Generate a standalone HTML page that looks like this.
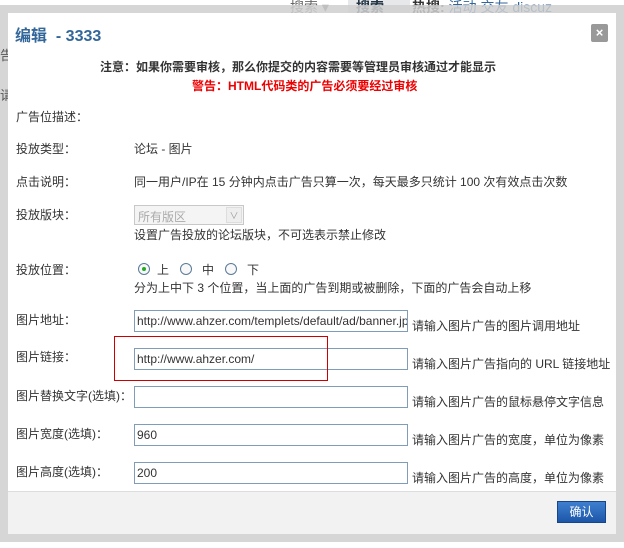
<!DOCTYPE html>
<html><head><meta charset="utf-8"><style>
*{margin:0;padding:0;box-sizing:border-box}
body{width:624px;height:548px;background:#fff;position:relative;overflow:hidden;font-family:"Liberation Sans","Noto Sans CJK SC",sans-serif;font-size:12px;color:#333}
.a{position:absolute;white-space:nowrap}
.ov{position:absolute;left:0;top:5px;width:624px;height:537px;background:#cfcfcf}
.dlg{position:absolute;left:8px;top:13px;width:608px;height:521px;background:#fff}
.ft{position:absolute;left:8px;top:491px;width:608px;height:43px;background:#f2f2f2;border-top:1px solid #ddd}
.in{position:absolute;left:134px;width:274px;height:22px;border:1px solid #7f9db9;background:#fff;padding:3px 2px;font-size:12px;color:#333;overflow:hidden;white-space:nowrap}
.lb{position:absolute;left:16px;white-space:nowrap}
.v{position:absolute;left:134px;white-space:nowrap}
.h{position:absolute;left:412px;white-space:nowrap}
.r{position:absolute;width:12px;height:12px;border:1px solid #5a7a9a;border-radius:50%;background:#f8f8f8}
</style></head><body>
<div class="a" style="left:290px;top:-3px;color:#666;font-size:14px">搜索 ▾</div>
<div class="a" style="left:348px;top:0;width:62px;height:13px;background:#e6e8ea"></div>
<div class="a" style="left:356px;top:-3px;color:#234;font-size:14px;font-weight:bold">搜索</div>
<div class="a" style="left:412px;top:-3px;font-size:14px"><b>热搜:</b> <span style="color:#369">活动 交友 discuz</span></div>
<div class="ov" style="opacity:.85"></div>
<div class="a" style="left:0;top:45px;color:#555;font-size:13px">告</div>
<div class="a" style="left:0;top:85px;color:#555;font-size:13px">请</div>
<div class="dlg"></div>
<div class="a" style="left:15px;top:22px;font-size:16px;font-weight:bold;color:#336699">编辑 &nbsp;- 3333</div>
<div class="a" style="left:591px;top:24px;width:17px;height:18px;background:#999;border-radius:2px;color:#fff;font-weight:bold;text-align:center;line-height:18px;font-size:13px">×</div>
<div class="a" style="left:100px;top:58px;font-weight:bold;color:#333">注意：如果你需要审核，那么你提交的内容需要等管理员审核通过才能显示</div>
<div class="a" style="left:192px;top:77px;font-weight:bold;color:#e00">警告：HTML代码类的广告必须要经过审核</div>
<div class="lb" style="top:108px">广告位描述：</div>
<div class="lb" style="top:140px">投放类型：</div><div class="v" style="top:140px">论坛 - 图片</div>
<div class="lb" style="top:173px">点击说明：</div><div class="v" style="top:173px">同一用户/IP在 15 分钟内点击广告只算一次，每天最多只统计 100 次有效点击次数</div>
<div class="lb" style="top:206px">投放版块：</div>
<div class="a" style="left:134px;top:205px;width:110px;height:20px;border:1px solid #c8c8c8;background:#f4f4f4;color:#aaa;padding:2px 3px">所有版区<span style="position:absolute;right:1px;top:1px;width:16px;height:16px;border:1px solid #ddd;background:#eee;font-size:9px;text-align:center;line-height:16px;color:#999">∨</span></div>
<div class="v" style="top:226px">设置广告投放的论坛版块，不可选表示禁止修改</div>
<div class="lb" style="top:261px">投放位置：</div>
<span class="r" style="left:138px;top:263px"><span style="position:absolute;left:3px;top:3px;width:4px;height:4px;border-radius:50%;background:#2a2"></span></span>
<div class="a" style="left:157px;top:261px">上</div>
<span class="r" style="left:180px;top:263px"></span><div class="a" style="left:202px;top:261px">中</div>
<span class="r" style="left:225px;top:263px"></span><div class="a" style="left:247px;top:261px">下</div>
<div class="v" style="top:279px">分为上中下 3 个位置，当上面的广告到期或被删除，下面的广告会自动上移</div>
<div class="lb" style="top:311px">图片地址：</div><div class="in" style="top:310px">http://www.ahzer.com/templets/default/ad/banner.jpg</div><div class="h" style="top:317px">请输入图片广告的图片调用地址</div>
<div class="lb" style="top:348px">图片链接：</div><div class="in" style="top:348px">http://www.ahzer.com/</div><div class="h" style="top:355px">请输入图片广告指向的 URL 链接地址</div>
<div class="a" style="left:114px;top:336px;width:214px;height:45px;border:1px solid #c00"></div>
<div class="lb" style="top:387px">图片替换文字(选填)：</div><div class="in" style="top:386px"></div><div class="h" style="top:393px">请输入图片广告的鼠标悬停文字信息</div>
<div class="lb" style="top:425px">图片宽度(选填)：</div><div class="in" style="top:424px">960</div><div class="h" style="top:431px">请输入图片广告的宽度，单位为像素</div>
<div class="lb" style="top:463px">图片高度(选填)：</div><div class="in" style="top:462px">200</div><div class="h" style="top:469px">请输入图片广告的高度，单位为像素</div>
<div class="ft"></div>
<div class="a" style="left:557px;top:501px;width:49px;height:22px;background:linear-gradient(#3f7fd0,#1c56a8);border:1px solid #15458a;color:#fff;text-align:center;line-height:20px">确认</div>
</body></html>
